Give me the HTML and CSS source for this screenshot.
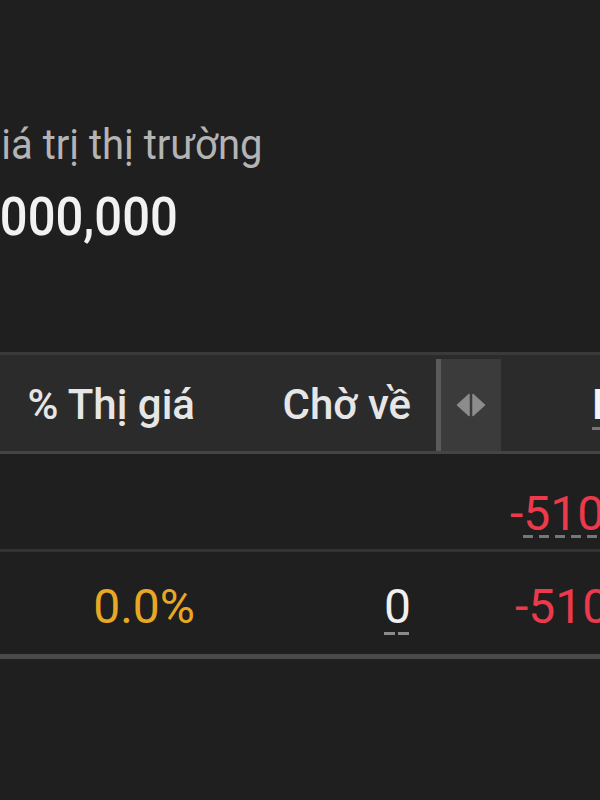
FILE: index.html
```html
<!DOCTYPE html>
<html lang="vi">
<head>
<meta charset="utf-8">
<title>Giá trị thị trường</title>
<link rel="stylesheet" href="styles.css">
</head>
<body>
<div class="page">
  <section class="summary">
    <div class="label">Giá trị thị trường</div>
    <div class="value">5,000,000</div>
  </section>

  <section class="table">
    <div class="row head">
      <div class="cell num">% Thị giá</div>
      <div class="cell num">Chờ về</div>
      <div class="cell handle">
        <span class="bar"></span>
        <span class="grip">
          <svg width="30" height="24" viewBox="0 0 30 24" aria-hidden="true">
            <path d="M13 1.5 L1.5 12 L13 22.5 Z" fill="#8c8c8c" stroke="#8c8c8c" stroke-width="1.5" stroke-linejoin="round"/>
            <path d="M17 1.5 L28.5 12 L17 22.5 Z" fill="#8c8c8c" stroke="#8c8c8c" stroke-width="1.5" stroke-linejoin="round"/>
          </svg>
        </span>
      </div>
      <div class="cell wide"><span class="dash hdash">Lãi/Lỗ</span></div>
    </div>

    <div class="row body sum">
      <div class="cell num"></div>
      <div class="cell num"></div>
      <div class="cell"></div>
      <div class="cell wide first"><span class="neg">-<span class="dash">510,000</span></span></div>
    </div>

    <div class="row body last">
      <div class="cell num"><span class="pct">0.0%</span></div>
      <div class="cell num"><span class="dash zero">0</span></div>
      <div class="cell"></div>
      <div class="cell wide second"><span class="neg">-510,000</span></div>
    </div>
  </section>
</div>
</body>
</html>
```

FILE: styles.css
```css
html, body {
  margin: 0;
  padding: 0;
  background: #1f1f1f;
  overflow: hidden;
}

body {
  font-family: Roboto, "Noto Sans", "Liberation Sans", sans-serif;
  color: #e8e8e8;
  width: 600px;
  height: 800px;
}

.page {
  width: 600px;
  overflow: hidden;
}

.summary {
  padding-top: 121px;
}

.label {
  font-size: 40px;
  line-height: 50px;
  color: #b4b4b4;
  margin-left: -26px;
  white-space: nowrap;
  transform: scaleY(1.08);
  transform-origin: 0 80%;
}

.value {
  margin-top: 18px;
  font-size: 49px;
  line-height: 60px;
  font-weight: 500;
  color: #f2f2f2;
  margin-left: -39px;
  white-space: nowrap;
  transform: scaleY(1.08);
  transform-origin: 0 80%;
}

.table {
  margin-top: 103px;
  width: 901px;
  border-top: 3px solid #3a3a3a;
}

.row {
  display: grid;
  grid-template-columns: 217px 219px 65px 400px;
  white-space: nowrap;
}

.cell {
  box-sizing: border-box;
}

.num {
  text-align: right;
  padding-right: 22px;
}

.row .num:nth-child(2) {
  padding-right: 25px;
}

.head {
  height: 99px;
  background: #2b2b2b;
  border-bottom: 3px solid #444444;
  box-sizing: border-box;
  font-size: 42px;
  line-height: 50px;
  font-weight: 500;
  color: #e6e6e6;
}

.head .cell {
  padding-top: 25px;
}

.head .handle {
  padding-top: 0;
  margin-top: 4px;
  display: flex;
  height: 92px;
}

.handle .bar {
  width: 5px;
  background: #5a5a5a;
}

.handle .grip {
  flex: 1;
  background: #3b3b3b;
  display: flex;
  align-items: center;
  justify-content: center;
  padding-bottom: 1px;
  box-sizing: border-box;
}

.head .wide {
  padding-left: 91px;
  color: #f4f4f4;
}

.body {
  font-size: 48px;
  line-height: 56px;
}

.sum {
  height: 98px;
  border-bottom: 3px solid #333333;
  box-sizing: border-box;
}

.sum .cell {
  padding-top: 32px;
}

.last {
  height: 107px;
  border-bottom: 5px solid #4a4a4a;
  box-sizing: border-box;
}

.last .cell {
  padding-top: 27px;
}

.wide.first {
  padding-left: 9px;
}

.wide.second {
  padding-left: 14px;
}

.neg {
  color: #ec3a4c;
}

.pct {
  color: #e8a823;
}

.dash {
  display: inline-block;
  line-height: 1;
  background-image: linear-gradient(to right, #767676 0 10px, transparent 10px 16px);
  background-size: 16px 3px;
  background-repeat: repeat-x;
  background-position: left bottom;
}

.dash.zero {
  color: #f0f0f0;
  padding-bottom: 4px;
  background-image: linear-gradient(to right, #8a8a8a 0 11px, transparent 11px 14px);
  background-size: 14px 3px;
}

.dash.hdash {
  padding-bottom: 4px;
}
```
